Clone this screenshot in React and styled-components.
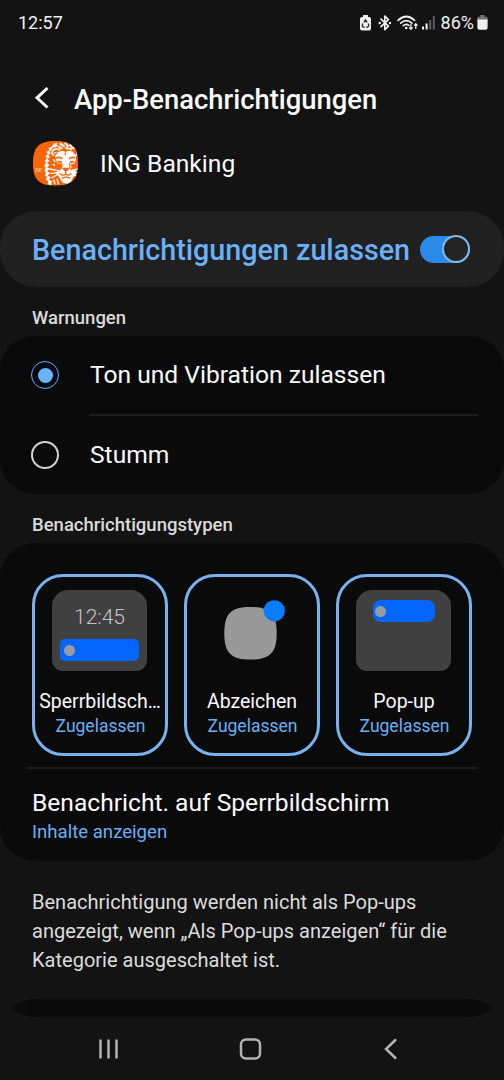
import React, { useState } from "react";
import styled, { createGlobalStyle } from "styled-components";

const GlobalStyle = createGlobalStyle`
  * {
    box-sizing: border-box;
  }
  body {
    margin: 0;
    background: #131313;
    color: #fafafa;
    font-family: Roboto, "Noto Sans", sans-serif;
  }
`;

const Screen = styled.div`
  display: flex;
  flex-direction: column;
  width: 504px;
  height: 1080px;
  overflow: hidden;
  background: #131313;
`;

const StatusBar = styled.div`
  display: flex;
  justify-content: space-between;
  align-items: center;
  height: 45px;
  padding: 0 16px 0 18px;
  flex: none;
  font-size: 18px;
  color: #f0f0f0;
`;

const StatusIcons = styled.div`
  display: flex;
  align-items: center;
  svg {
    display: block;
  }
`;

const Percent = styled.span`
  margin: 0 3px 0 6px;
  font-size: 18px;
`;

const ScrollArea = styled.main`
  height: 971.5px;
  flex: none;
  overflow: hidden;
  border-radius: 0 0 35px 35px;
`;

const TitleBar = styled.header`
  display: flex;
  align-items: center;
  height: 58px;
  margin-top: 26px;
  padding-left: 33px;
  svg {
    margin-bottom: 4px;
  }
`;

const Title = styled.h1`
  margin: 0 0 0 23px;
  font-size: 27.4px;
  line-height: 36px;
  font-weight: 500;
  white-space: nowrap;
`;

const AppRow = styled.div`
  display: flex;
  align-items: center;
  height: 68px;
  padding-left: 33px;
`;

const AppName = styled.div`
  margin-left: 22px;
  font-size: 24.6px;
`;

const AllowCard = styled.section`
  display: flex;
  align-items: center;
  justify-content: space-between;
  height: 76px;
  margin-top: 14px;
  padding: 0 34px 0 32px;
  border-radius: 36px;
  background: #202020;
`;

const AllowText = styled.div`
  padding-top: 2px;
  font-size: 28.7px;
  line-height: 38px;
  font-weight: 500;
  color: #69b0f7;
  white-space: nowrap;
`;

const Switch = styled.button`
  display: flex;
  align-items: center;
  justify-content: ${(props) => (props.$on ? "flex-end" : "flex-start")};
  width: 50px;
  height: 27px;
  flex: none;
  padding: 0;
  border: none;
  border-radius: 14px;
  background: ${(props) => (props.$on ? "#2a8ae9" : "#555")};
`;

const Knob = styled.span`
  width: 28px;
  height: 28px;
  border: 2px solid #7cb8f3;
  border-radius: 50%;
  background: #242424;
`;

const SectionLabel = styled.h2`
  margin: 0;
  padding-left: 32px;
  height: ${(props) => props.$height}px;
  line-height: 62px;
  font-size: 18.5px;
  font-weight: 500;
  color: #dadada;
`;

const Card = styled.section`
  border-radius: 35px;
  background: #0a0a0a;
`;

const RadioRow = styled.div`
  display: flex;
  align-items: center;
  height: ${(props) => props.$height}px;
  padding-left: 31px;
  font-size: 24.6px;
`;

const RadioLabel = styled.span`
  padding-bottom: 2px;
`;

const RadioRing = styled.span`
  display: flex;
  align-items: center;
  justify-content: center;
  width: 28px;
  height: 28px;
  margin-right: 31px;
  border: ${(props) => (props.$checked ? "1.5px solid #67a9ed" : "2px solid #d2d2d2")};
  border-radius: 50%;
  background: ${(props) => (props.$checked ? "#030a13" : "transparent")};
`;

const RadioDot = styled.span`
  width: 15px;
  height: 15px;
  border-radius: 50%;
  background: #6bb3fb;
`;

const Divider = styled.div`
  height: 2px;
  margin: 0 26px 0 ${(props) => props.$left}px;
  background: #1c1c1c;
`;

const TypeGrid = styled.div`
  display: grid;
  grid-template-columns: repeat(3, 136px);
  column-gap: 16px;
  padding: 31px 32px 11px;
`;

const TypeCard = styled.div`
  display: flex;
  flex-direction: column;
  align-items: center;
  height: 182px;
  padding-top: 13px;
  border: 3px solid #76b2ef;
  border-radius: 31px;
`;

const TypeName = styled.div`
  margin-top: 18px;
  line-height: 25px;
  font-size: 19.5px;
  white-space: nowrap;
`;

const TypeState = styled.div`
  padding-left: 1px;
  line-height: 25px;
  font-size: 17.5px;
  color: #69aff5;
`;

const Preview = styled.div`
  display: flex;
  flex-direction: column;
  align-items: center;
  width: 95px;
  height: 81px;
  margin-right: 1px;
  border-radius: 16px 16px 11px 11px;
  background: ${(props) => (props.$plain ? "transparent" : "#404040")};
`;

const Clock = styled.div`
  margin-top: 14px;
  height: 25px;
  line-height: 26px;
  font-size: 21px;
  font-weight: 300;
  color: #c4c4c4;
`;

const Bubble = styled.div`
  display: flex;
  align-items: center;
  width: ${(props) => props.$width}px;
  height: 22px;
  margin-top: ${(props) => props.$top}px;
  padding-left: ${(props) => props.$inset}px;
  border-radius: ${(props) => props.$radius}px;
  background: #0566ff;
`;

const BubbleDot = styled.span`
  width: 11px;
  height: 11px;
  border-radius: 50%;
  background: #999ba3;
`;

const LockRow = styled.div`
  height: 92px;
  padding: 19px 0 0 32px;
`;

const LockTitle = styled.div`
  line-height: 30px;
  font-size: 24.6px;
  white-space: nowrap;
`;

const LockValue = styled.div`
  line-height: 28px;
  font-size: 18.6px;
  color: #69aff5;
`;

const Note = styled.p`
  margin: 27px 32px 24px;
  font-size: 20.05px;
  line-height: 29px;
  color: #dcdcdc;
  white-space: nowrap;
`;

const NextCard = styled(Card)`
  height: 90px;
`;

const NavBar = styled.nav`
  display: flex;
  align-items: center;
  justify-content: space-between;
  flex: 1;
  padding: 2px 105px 0 96px;
  svg {
    display: block;
  }
`;

const BatteryCareIcon = () => (
  <svg width="11" height="16" viewBox="0 0 11 16">
    <path d="M3 0h5v2h1.2Q11 2 11 4v9.5q0 2-2 2H2q-2 0-2-2V4q0-2 1.8-2H3z" fill="#f0f0f0" />
    <path
      d="M3.9 7.3 5.5 4.8l1.6 2.5M8.1 8.5l.9 2.1-1.5 1.5H6.2M4.7 12.1H3L2.1 10.6 3 8.5"
      fill="none"
      stroke="#222"
      strokeWidth="1.25"
    />
  </svg>
);

const Bluetooth = styled.svg`
  margin-left: 7px;
`;

const BluetoothIcon = () => (
  <Bluetooth width="14" height="16" viewBox="0 0 14 16">
    <path
      d="M3 4.2l7.4 7L6.8 14.6V1.2l3.6 3.4L3 11.6"
      fill="none"
      stroke="#eee"
      strokeWidth="1.7"
      strokeLinejoin="round"
      strokeLinecap="round"
    />
    <circle cx="1.7" cy="8" r="1.2" fill="#eee" />
    <circle cx="12" cy="8" r="1.2" fill="#eee" />
  </Bluetooth>
);

const Wifi = styled.svg`
  margin-left: 5px;
`;

const WifiIcon = () => (
  <Wifi width="22" height="16" viewBox="0 0 22 16">
    <g fill="none" stroke="#eee" strokeWidth="1.7" strokeLinecap="round">
      <path d="M1 5.3Q9.3-2.3 17.6 5.3" />
      <path d="M3.7 8.1q5.6-5 11.2 0" />
      <path d="M6.3 10.7q3-2.5 5.5-.4" />
    </g>
    <circle cx="9.2" cy="13" r="1.3" fill="#eee" />
    <path
      d="M13.9 9v5M12.2 12.3l1.7 2 1.7-2M18.8 14V9M17.1 10.7l1.7-2 1.7 2"
      fill="none"
      stroke="#eee"
      strokeWidth="1.3"
    />
  </Wifi>
);

const Signal = styled.svg`
  margin-left: 3px;
`;

const SignalIcon = () => (
  <Signal width="13" height="14" viewBox="0 0 13 14">
    <rect x="0" y="10.5" width="2" height="3" fill="#eee" />
    <rect x="3.6" y="7.5" width="2" height="6" fill="#eee" />
    <rect x="7.2" y="4" width="2" height="9.5" fill="#5d5d5d" />
    <rect x="10.8" y="0" width="2" height="13.5" fill="#5d5d5d" />
  </Signal>
);

const BatteryIcon = () => (
  <svg width="11" height="15" viewBox="0 0 11 15">
    <path d="M3.3 0h4.4v1.7h1.5Q10.6 1.7 10.6 3v3H.4V3q0-1.3 1.4-1.3h1.5z" fill="#707070" />
    <path d="M.4 4.4h10.2v8.4q0 1.9-1.9 1.9H2.3Q.4 14.7.4 12.8z" fill="#f0f0f0" />
  </svg>
);

const BackIcon = () => (
  <svg width="18" height="24" viewBox="0 0 18 24">
    <path d="M14.5 2 4 11.8l10.5 9.7" fill="none" stroke="#f5f5f5" strokeWidth="3" />
  </svg>
);

// Lion badge of the banking app, 3 units per pixel
const LionIcon = () => (
  <svg width="45" height="45" viewBox="0 0 135 135">
    <defs>
      <clipPath id="badge">
        <path d="M67 0C117 0 135 18 135 67S117 134 67 134 0 116 0 67 17 0 67 0z" />
      </clipPath>
    </defs>
    <g clipPath="url(#badge)">
      <rect width="135" height="135" fill="#fb6509" />
      <text x="7" y="93" fontFamily="Roboto" fontSize="17" fontWeight="500" fill="#ffd2b2">
        DE
      </text>
      {/* mane */}
      <path
        d="M62 8 74 5 70 13 78 14 66 19 58 20 55 28 49 31 53 38 46 41 51 49 43 53 50 61 41 66 50 72 42 79 51 83 42 91 51 95 44 104 53 108 48 116 57 121 54 134 44 128 46 120 38 116 42 107 35 103 39 94 34 90 38 80 33 74 39 65 35 60 42 52 37 46 44 39 40 32 48 29 47 20 56 18z"
        fill="#fff"
      />
      <g fill="none" stroke="#fff" strokeWidth="6">
        <path d="M80 7l15 10M96 5l10 12M111 10l5 10M76 17l12 6M97 20l13 4" />
      </g>
      {/* ears */}
      <g fill="none" stroke="#fff" strokeWidth="5">
        <path d="M61 44q-7-10 0-17 10-8 20 1" />
        <path d="M113 28q3-9 12-8 8 4 9 16l-4 8" />
        <path d="M65 40q-2-8 6-6" strokeWidth="3" />
      </g>
      {/* face */}
      <path
        d="M66 44 76 33Q88 27 98 33 110 27 120 33L129 44 128 58 124 68 114 70 116 83 129 91 128 102 120 108 115 121 103 128 91 126 83 116 76 105 69 99 73 89 85 81 87 69 73 67z"
        fill="#fff"
      />
      <g fill="none" stroke="#fb6509" strokeWidth="5">
        <path d="M69 52q10-7 19 2M108 54q8-8 18-3" />
        <path d="M74 62l12 1M111 63l11-1" strokeWidth="6" />
        <path d="M97 34v9M87 66l-1 14-8 8M110 66l1 14 6 7" strokeWidth="3.5" />
        <path d="M98 90v9q-9 8-18-2M98 99q9 8 17-2M86 112q13-7 25 0" strokeWidth="4" />
      </g>
      <path d="M87 80h23l-5 8-7 4-6-4z" fill="#fb6509" />
      <g fill="none" stroke="#fff" strokeWidth="4">
        <path d="M75 89 50 84M74 95l-23 3M77 99l-22 12M118 89l16-5M119 95h16M118 101l16 5" />
        <path d="M62 115l4 15M72 113l5 18M62 54l4 10M59 69l7 5" />
      </g>
    </g>
  </svg>
);

const BadgeIcon = () => (
  <svg width="95" height="81" viewBox="0 0 95 81">
    <path d="M46.5 17C66 17 72.7 24 72.7 43.2S66 69.6 46.5 69.6 20.3 63 20.3 43.2 27 17 46.5 17z" fill="#999" />
    <circle cx="70.3" cy="20.8" r="10.6" fill="#087eff" />
  </svg>
);

const RecentsIcon = () => (
  <svg width="22" height="22" viewBox="0 0 22 22">
    <path d="M4.5 1.5v19M12.5 1.5v19M20.5 1.5v19" stroke="#b3b3b3" strokeWidth="2.5" />
  </svg>
);

const HomeIcon = () => (
  <svg width="24" height="24" viewBox="0 0 24 24">
    <rect x="2" y="2.5" width="19" height="19" rx="5" fill="none" stroke="#b3b3b3" strokeWidth="2.5" />
  </svg>
);

const NavBackIcon = () => (
  <svg width="16" height="22" viewBox="0 0 16 22">
    <path d="M12.4 2 3 11l9.4 9" fill="none" stroke="#b3b3b3" strokeWidth="2.5" strokeLinecap="round" />
  </svg>
);

const RadioOption = ({ label, height, checked, onSelect }) => (
  <RadioRow $height={height} role="radio" aria-checked={checked} onClick={onSelect}>
    <RadioRing $checked={checked}>{checked && <RadioDot />}</RadioRing>
    <RadioLabel>{label}</RadioLabel>
  </RadioRow>
);

const NotificationType = ({ name, children }) => (
  <TypeCard>
    {children}
    <TypeName>{name}</TypeName>
    <TypeState>Zugelassen</TypeState>
  </TypeCard>
);

const App = () => {
  const [allowed, setAllowed] = useState(true);
  const [alertMode, setAlertMode] = useState("sound");

  return (
    <Screen>
      <GlobalStyle />
      <StatusBar>
        <span>12:57</span>
        <StatusIcons>
          <BatteryCareIcon />
          <BluetoothIcon />
          <WifiIcon />
          <SignalIcon />
          <Percent>86%</Percent>
          <BatteryIcon />
        </StatusIcons>
      </StatusBar>

      <ScrollArea>
        <TitleBar>
          <BackIcon />
          <Title>App-Benachrichtigungen</Title>
        </TitleBar>
        <AppRow>
          <LionIcon />
          <AppName>ING Banking</AppName>
        </AppRow>

        <AllowCard>
          <AllowText>Benachrichtigungen zulassen</AllowText>
          <Switch $on={allowed} onClick={() => setAllowed(!allowed)}>
            <Knob />
          </Switch>
        </AllowCard>

        <SectionLabel $height={49}>Warnungen</SectionLabel>
        <Card>
          <RadioOption
            label="Ton und Vibration zulassen"
            height={78}
            checked={alertMode === "sound"}
            onSelect={() => setAlertMode("sound")}
          />
          <Divider $left={89} />
          <RadioOption
            label="Stumm"
            height={78}
            checked={alertMode === "silent"}
            onSelect={() => setAlertMode("silent")}
          />
        </Card>

        <SectionLabel $height={49}>Benachrichtigungstypen</SectionLabel>
        <Card>
          <TypeGrid>
            <NotificationType name="Sperrbildsch…">
              <Preview>
                <Clock>12:45</Clock>
                <Bubble $width={79} $top={10} $inset={4} $radius={5}>
                  <BubbleDot />
                </Bubble>
              </Preview>
            </NotificationType>
            <NotificationType name="Abzeichen">
              <Preview $plain>
                <BadgeIcon />
              </Preview>
            </NotificationType>
            <NotificationType name="Pop-up">
              <Preview>
                <Bubble $width={62} $top={10} $inset={2} $radius={8}>
                  <BubbleDot />
                </Bubble>
              </Preview>
            </NotificationType>
          </TypeGrid>
          <Divider $left={26} />
          <LockRow>
            <LockTitle>Benachricht. auf Sperrbildschirm</LockTitle>
            <LockValue>Inhalte anzeigen</LockValue>
          </LockRow>
        </Card>

        <Note>
          Benachrichtigung werden nicht als Pop-ups
          <br />
          angezeigt, wenn „Als Pop-ups anzeigen“ für die
          <br />
          Kategorie ausgeschaltet ist.
        </Note>
        <NextCard />
      </ScrollArea>

      <NavBar>
        <RecentsIcon />
        <HomeIcon />
        <NavBackIcon />
      </NavBar>
    </Screen>
  );
};

export default App;
